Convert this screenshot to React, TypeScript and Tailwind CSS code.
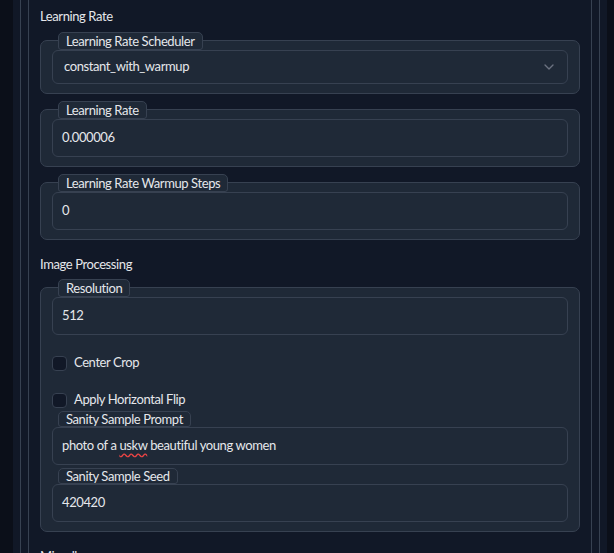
import { ChevronDown } from 'lucide-react';

const font = { fontFamily: 'Lato, "Noto Sans", sans-serif', letterSpacing: '-0.4px' };

function Tab({ children, inline = false }: { children: React.ReactNode; inline?: boolean }) {
  return (
    <span
      className={`px-[7px] flex items-center rounded-t-[5px] rounded-b-[3px] border border-[#374151] bg-[#1f2937] text-[13px] text-[#e5e7eb] leading-none ${
        inline ? 'h-[16px] ml-[6px] w-fit' : 'absolute left-[17px] top-[-9px] h-[18px]'
      }`}
    >
      {children}
    </span>
  );
}

function Field({ value, h = 38, select = false }: { value: React.ReactNode; h?: number; select?: boolean }) {
  return (
    <div
      className={`flex items-center justify-between rounded-[6px] border border-[#374151] bg-[#1f2937] pr-[10px] text-[13px] text-[#e5e7eb] ${
        h === 34 ? 'h-[34px] pl-[11px]' : 'h-[38px] pl-[9px]'
      }`}
    >
      <span>{value}</span>
      {select && <ChevronDown className="w-4 h-4 text-[#6b7280]" strokeWidth={2} />}
    </div>
  );
}

function Box({ label, children, className = '' }: { label: string; children: React.ReactNode; className?: string }) {
  return (
    <div className={`relative rounded-[7px] border border-[#374151] bg-[#1f2937] px-[11px] pt-[9px] pb-[9px] ${className}`}>
      <Tab>{label}</Tab>
      {children}
    </div>
  );
}

function Check({ label }: { label: string }) {
  return (
    <div className="flex items-center gap-[7px] h-[16px]">
      <span className="w-[15px] h-[15px] rounded-[4px] border border-[#374151] bg-[#111827]" />
      <span className="text-[13px] text-[#e5e7eb]">{label}</span>
    </div>
  );
}

export default function App() {
  return (
    <div className="h-[553px] overflow-hidden bg-[#0b0f19] flex" style={font}>
      <div className="ml-[13px] w-[594px] bg-[#111827] px-[7px]">
        <div className="h-full border-x border-[#374151] px-[7px]">
          <div className="h-full border-x border-[#374151] px-[11px]">
            <h2 className="pt-[7px] h-[18px] box-content text-[13px] leading-[18px] text-[#e5e7eb]">Learning Rate</h2>

            <Box label="Learning Rate Scheduler" className="mt-[15px]">
              <Field value="constant_with_warmup" h={34} select />
            </Box>

            <Box label="Learning Rate" className="mt-[15px]">
              <Field value="0.000006" />
            </Box>

            <Box label="Learning Rate Warmup Steps" className="mt-[15px]">
              <Field value="0" />
            </Box>

            <h2 className="mt-[15px] h-[18px] text-[13px] leading-[18px] text-[#e5e7eb]">Image Processing</h2>

            <Box label="Resolution" className="mt-[14px]">
              <Field value="512" />
              <div className="mt-[20px]">
                <Check label="Center Crop" />
              </div>
              <div className="mt-[21px]">
                <Check label="Apply Horizontal Flip" />
              </div>
              <div className="mt-[3px]">
                <Tab inline>Sanity Sample Prompt</Tab>
                <Field
                  value={
                    <>
                      photo of a{' '}
                      <span className="underline decoration-wavy decoration-[#ef4444] underline-offset-2">uskw</span>{' '}
                      beautiful young women
                    </>
                  }
                />
              </div>
              <div className="mt-[3px]">
                <Tab inline>Sanity Sample Seed</Tab>
                <Field value="420420" />
              </div>
            </Box>

            <h2 className="mt-[15px] h-[18px] text-[13px] leading-[18px] text-[#e5e7eb]">Miscellaneous</h2>
          </div>
        </div>
      </div>
    </div>
  );
}
